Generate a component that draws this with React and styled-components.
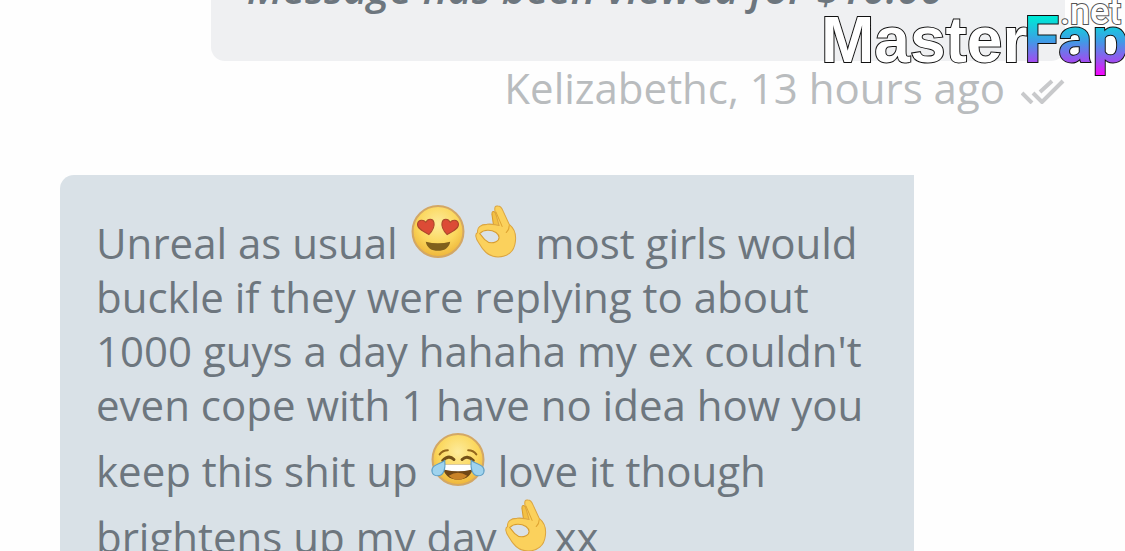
import styled, { createGlobalStyle } from 'styled-components'

const App = () => {

    return (

        <Thread>
            <GlobalStyle />
            <Message $sent>
                <Bubble $sent>
                    <Notice>Message has been viewed for $10.00</Notice>
                </Bubble>
                <Meta>
                    <span>Kelizabethc, 13 hours ago</span>
                    <DoubleCheck />
                </Meta>
            </Message>
            <Message>
                <Bubble>
                    <Body>
                        Unreal as usual <HeartEyes /><OkHand /> most girls would buckle if they were
                        replying to about 1000 guys a day hahaha my ex couldn't even cope with 1 have
                        no idea how you keep this shit up <TearsOfJoy /> love it though brightens up
                        my day<OkHand />xx
                    </Body>
                </Bubble>
            </Message>
            <Watermark />
        </Thread>

    )
}

const DoubleCheck = () => (
    <CheckIcon viewBox="0 0 44 32" aria-label="Read" role="img">
        <path d="M1 21 L11 31 M12 21 L21 30 L42 9 M19 20 L31 9" />
    </CheckIcon>
)

const HeartEyes = () => (
    <Emoji viewBox="0 0 54 54" role="img" aria-label="heart eyes">
        <defs>
            <radialGradient id="face" cx="50%" cy="35%" r="65%">
                <stop offset="0" stopColor="#fdeb9c" />
                <stop offset="0.6" stopColor="#fbd75c" />
                <stop offset="1" stopColor="#eeb53a" />
            </radialGradient>
        </defs>
        <circle cx="27" cy="27" r="25" fill="url(#face)" stroke="#d3a765" strokeWidth="2" />
        <path d="M18 30 C10 26 6 23 7 19 C8 15 13 15 15 18 C17 14 22 14 23 18 C24 22 21 27 18 30Z" fill="#dc4b36" stroke="#a9472a" />
        <path d="M36 30 C44 26 48 23 47 19 C46 15 41 15 39 18 C37 14 32 14 31 18 C30 22 33 27 36 30Z" fill="#dc4b36" stroke="#a9472a" />
        <path d="M15 37 Q27 40 39 37 C38 43 33 46 27 46 C21 46 16 43 15 37Z" fill="#80601c" />
    </Emoji>
)

const TearsOfJoy = () => (
    <Emoji viewBox="0 0 54 54" role="img" aria-label="tears of joy">
        <circle cx="27" cy="27" r="25" fill="url(#face)" stroke="#d3a765" strokeWidth="2" />
        <path d="M9 22 Q12 18 17 18 M37 18 Q42 18 45 22" fill="none" stroke="#94661b" strokeWidth="2" strokeLinecap="round" />
        <path d="M12 28 Q18 22 23 27 M31 27 Q36 22 42 28" fill="none" stroke="#735017" strokeWidth="3" strokeLinecap="round" />
        <path d="M12 32 H42 C42 42 35 47 27 47 C19 47 12 42 12 32Z" fill="#704716" />
        <path d="M13 32 H41 L40 37 Q27 40 14 37Z" fill="#fff" />
        <path d="M18 43 Q27 37 36 43 Q32 47 27 47 Q22 47 18 43Z" fill="#c98328" />
        <path d="M14 28 C15 36 13 43 7 43 C1 43 0 37 3 34 C6 31 10 31 14 28Z" fill="#9fd3ee" stroke="#5f9fc4" />
        <path d="M40 28 C39 36 41 43 47 43 C53 43 54 37 51 34 C48 31 44 31 40 28Z" fill="#9fd3ee" stroke="#5f9fc4" />
    </Emoji>
)

const OkHand = () => (
    <Emoji viewBox="0 0 54 54" role="img" aria-label="ok hand">
        <path d="M25 24 L23 10 Q23 6 26 8 L33 22Z" fill="#f3c044" stroke="#d89c2e" />
        <path
            d="M30 21 L26 7 Q25 1 29 2 Q32 2 34 7 L40 20 C45 24 47 30 46 37 C45 47 38 52 29 52 C19 52 14 45 10 38 C7 34 6 29 9 28 C8 23 12 20 18 20 C23 19 27 21 30 21Z"
            fill="#fbd15c"
            stroke="#dba542"
        />
        <path d="M11 29 C15 25 22 25 27 28 C31 31 31 35 27 37 C23 39 19 38 16 35 C14 33 13 31 11 29Z" fill="#dae1e6" stroke="#d89c2e" />
        <path d="M27 8 L33 22 M37 28 Q40 25 40 21" fill="none" stroke="#dfa432" strokeLinecap="round" />
    </Emoji>
)

const Watermark = () => (
    <Logo viewBox="0 0 304 84" role="img" aria-label="MasterFap.net">
        <defs>
            <linearGradient id="fap" gradientUnits="userSpaceOnUse" x1="0" y1="18" x2="0" y2="76">
                <stop offset="0" stopColor="#00e6d6" />
                <stop offset="0.4" stopColor="#3f9be6" />
                <stop offset="0.75" stopColor="#a04df0" />
                <stop offset="1" stopColor="#ff00ff" />
            </linearGradient>
        </defs>
        <LogoName x="0" y="62">Master</LogoName>
        <LogoAccent x="203" y="62">Fap</LogoAccent>
        <LogoSuffix x="239" y="24">.net</LogoSuffix>
    </Logo>
)

const GlobalStyle = createGlobalStyle `
    body {
        margin: 0;
        background-color: #fefefe;
        font-family: "Open Sans", sans-serif;
    }
`

const Thread = styled.main `
    display: flex;
    flex-direction: column;
    gap: 60px;
    position: relative;
    box-sizing: border-box;
    height: 100vh;
    overflow: hidden;
    padding: 0 60px;
    font-size: 42px;
    line-height: 54px;
`

const Message = styled.article `
    display: flex;
    flex-direction: column;
    flex-shrink: 0;
    align-items: ${props => props.$sent ? 'flex-end' : 'flex-start'};
    margin-top: ${props => props.$sent ? '-68px' : '0'};
`

const Bubble = styled.div `
    box-sizing: border-box;
    width: 85%;
    padding: 29px 36px 46px;
    color: #6d767e;
    background-color: ${props => props.$sent ? '#eff0f2' : '#d9e1e7'};
    border-radius: 14px 0 14px 14px;
`

const Body = styled.p `
    margin: 0;
`

const Notice = styled.p `
    margin: 0;
    font-style: italic;
    font-weight: 600;
`

const Meta = styled.footer `
    display: flex;
    align-items: center;
    gap: 16px;
    color: #b9bcbe;
`

const CheckIcon = styled.svg `
    width: 44px;
    height: 32px;
    fill: none;
    stroke: #c8c9cb;
    stroke-width: 4px;
`

const Emoji = styled.svg `
    width: 56px;
    height: 55px;
    margin: 0 1px;
    vertical-align: baseline;
`

const Logo = styled.svg `
    position: absolute;
    top: 0;
    right: 0;
    width: 304px;
    height: 84px;
`

const LogoText = styled.text `
    font-family: Roboto, sans-serif;
    font-size: 64px;
    font-weight: 700;
    fill: #fff;
    stroke: #111;
    stroke-width: 2px;
    paint-order: stroke;
`

const LogoName = styled(LogoText) `
    font-family: "Liberation Sans", sans-serif;
`

const LogoAccent = styled(LogoText) `
    fill: url(#fap);
`

const LogoSuffix = styled(LogoText) `
    font-size: 36px;
    font-weight: 500;
    stroke: #555;
`

export default App
